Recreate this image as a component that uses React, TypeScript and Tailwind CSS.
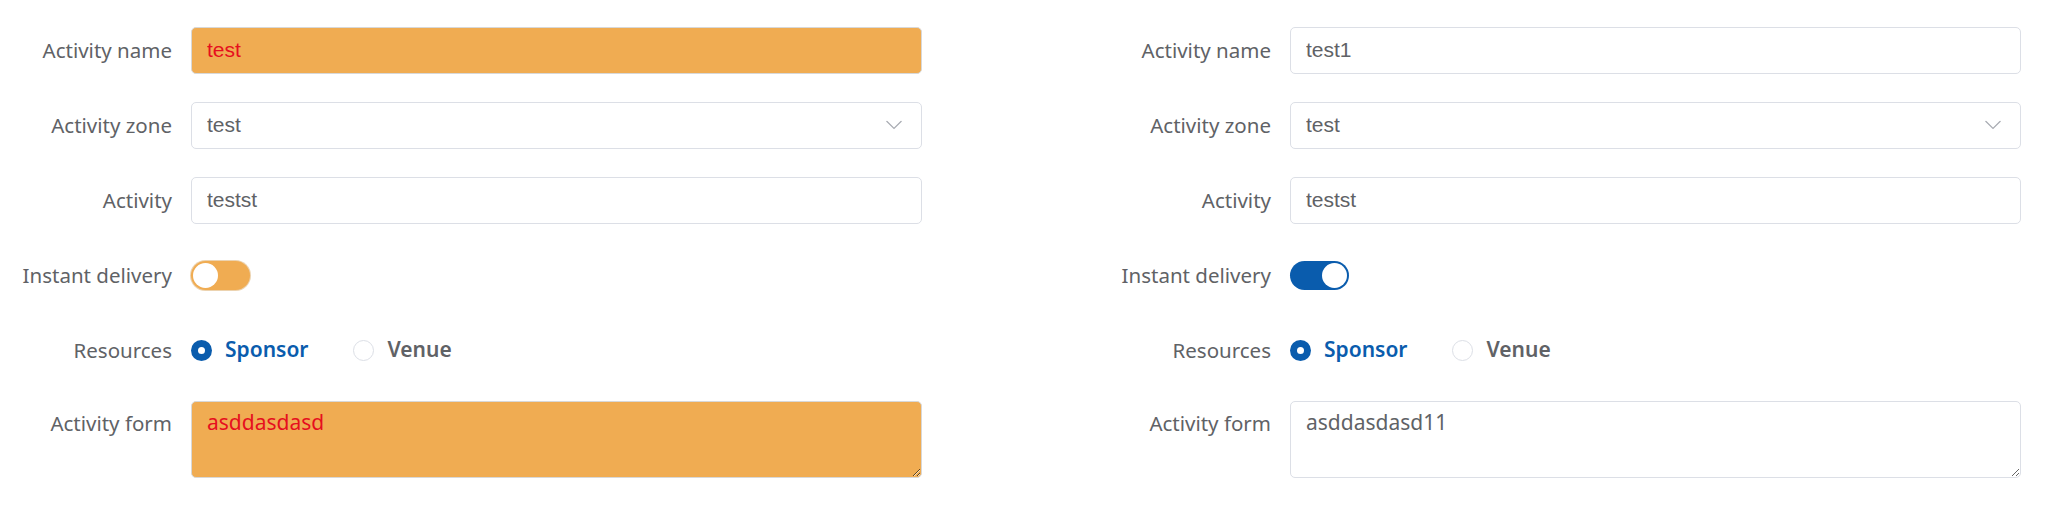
import { useState } from 'react'

type FormData = {
  name: string
  zone: string
  activity: string
  instant: boolean
  resource: 'sponsor' | 'venue'
  form: string
}

const labelFont = { fontFamily: '"Noto Sans", "Open Sans", sans-serif' }
const inputFont = { fontFamily: '"Liberation Sans", Arial, sans-serif' }

function Label({ children, top }: { children: string; top?: boolean }) {
  return (
    <div
      className={
        'w-[172px] shrink-0 text-right text-[20.5px] text-[#606266] mr-[19px] ' +
        (top ? 'self-start pt-[6px] leading-[32px]' : 'leading-[48px]')
      }
      style={labelFont}
    >
      {children}
    </div>
  )
}

function Chevron() {
  return (
    <svg width="16" height="9" viewBox="0 0 16 9" fill="none" className="absolute right-[20px] top-1/2 -translate-y-1/2">
      <path d="M0.5 0.5 L8 8 L15.5 0.5" stroke="#a8abb2" strokeWidth="1.2" />
    </svg>
  )
}

function Toggle({ on, warn }: { on: boolean; warn?: boolean }) {
  return (
    <div
      className={
        'flex h-[29px] w-[59px] items-center rounded-full px-[2px] ' +
        (warn
          ? 'bg-[#f0ac52] justify-start ring-1 ring-[#ecd3b0]'
          : on
            ? 'bg-[#0a5cad] justify-end'
            : 'bg-[#dcdfe6] justify-start')
      }
    >
      <div className="h-[25px] w-[25px] rounded-full bg-white" />
    </div>
  )
}

function Radio({ checked, label }: { checked: boolean; label: string }) {
  return (
    <div className="flex items-center">
      {checked ? (
        <div className="flex h-[21px] w-[21px] items-center justify-center rounded-full bg-[#0a5cad]">
          <div className="h-[7px] w-[7px] rounded-full bg-white" />
        </div>
      ) : (
        <div className="h-[21px] w-[21px] rounded-full border border-[#dcdfe6] bg-white" />
      )}
      <span
        className={'ml-[13px] text-[21px] font-semibold ' + (checked ? 'text-[#0a5cad]' : 'text-[#606266]')}
        style={labelFont}
      >
        {label}
      </span>
    </div>
  )
}

function ActivityForm({ data, warn }: { data: FormData; warn?: boolean }) {
  const boxBase = 'w-full rounded-[5px] border outline-none '
  const boxCls = warn
    ? boxBase + 'bg-[#f0ac52] border-[#d8d8d8] text-[#e60f1e]'
    : boxBase + 'bg-white border-[#dcdfe6] text-[#606266]'

  return (
    <div className="flex w-[922px] flex-col gap-[27px]">
      <div className="flex h-[48px] items-center">
        <Label>Activity name</Label>
        <input
          readOnly
          value={data.name}
          className={boxCls + ' h-[47px] px-[15px] text-[21px]'}
          style={inputFont}
        />
      </div>

      <div className="flex h-[48px] items-center">
        <Label>Activity zone</Label>
        <div className="relative w-full">
          <input
            readOnly
            value={data.zone}
            className={boxBase + 'h-[47px] bg-white border-[#dcdfe6] px-[15px] text-[21px] text-[#606266]'}
            style={inputFont}
          />
          <Chevron />
        </div>
      </div>

      <div className="flex h-[48px] items-center">
        <Label>Activity</Label>
        <input
          readOnly
          value={data.activity}
          className={boxBase + 'h-[47px] bg-white border-[#dcdfe6] px-[15px] text-[21px] text-[#606266]'}
          style={inputFont}
        />
      </div>

      <div className="flex h-[48px] items-center">
        <Label>Instant delivery</Label>
        <Toggle on={data.instant} warn={warn} />
      </div>

      <div className="flex h-[48px] items-center">
        <Label>Resources</Label>
        <div className="flex items-center gap-[45px]">
          <Radio checked={data.resource === 'sponsor'} label="Sponsor" />
          <Radio checked={data.resource === 'venue'} label="Venue" />
        </div>
      </div>

      <div className="flex">
        <Label top>Activity form</Label>
        <textarea
          readOnly
          value={data.form}
          className={boxCls + ' h-[77px] px-[15px] pt-[4px] text-[21px] leading-[32px]'}
          style={labelFont}
        />
      </div>
    </div>
  )
}

export default function App() {
  const [before] = useState<FormData>({
    name: 'test',
    zone: 'test',
    activity: 'testst',
    instant: false,
    resource: 'sponsor',
    form: 'asddasdasd',
  })
  const [after] = useState<FormData>({
    name: 'test1',
    zone: 'test',
    activity: 'testst',
    instant: true,
    resource: 'sponsor',
    form: 'asddasdasd11',
  })

  return (
    <div className="flex h-[525px] w-[2046px] gap-[177px] bg-white pt-[26px]">
      <ActivityForm data={before} warn />
      <ActivityForm data={after} />
    </div>
  )
}
